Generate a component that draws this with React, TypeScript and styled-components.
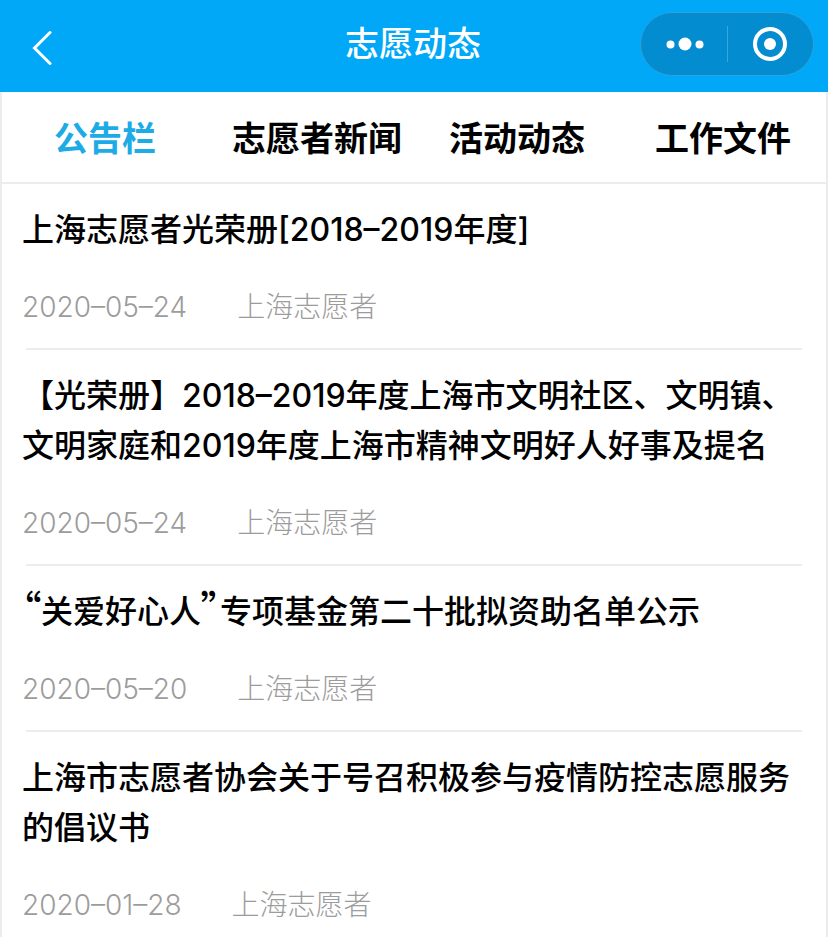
import React, { Fragment, useState } from "react";
import styled, { createGlobalStyle } from "styled-components";

const GlobalStyle = createGlobalStyle`
  *, *::before, *::after { box-sizing: border-box; }
  body {
    margin: 0;
    background: #ffffff;
    color: #000000;
    font-family: Inter, "Noto Sans CJK SC", sans-serif;
  }
  button { font: inherit; border: 0; background: none; padding: 0; cursor: pointer; }
`;

const Header = styled.header`
  display: grid;
  grid-template-columns: 1fr auto 1fr;
  align-items: center;
  height: 92px;
  padding: 0 14px 4px 12px;
  background: #02a8f8;
  color: #ffffff;
`;

const Title = styled.h1`
  margin: 0;
  font-size: 34px;
  line-height: 48px;
  font-weight: 500;
`;

const BackButton = styled.button`
  display: flex;
  justify-self: start;
  && { padding: 16px 16px 8px; }
`;

const Capsule = styled.div`
  display: flex;
  align-items: center;
  justify-self: end;
  width: 174px;
  height: 64px;
  border: 1px solid #2ba3dd;
  border-radius: 32px;
  background: #038ccf;
`;

const CapsuleButton = styled.button`
  display: flex;
  flex: 1;
  align-items: center;
  justify-content: center;
`;

const CapsuleDivider = styled.span`
  width: 1px;
  height: 36px;
  background: #3ba6db;
`;

const Page = styled.main`
  border: 0 solid #ececec;
  border-width: 0 2px;
`;

const Tabs = styled.nav`
  display: grid;
  grid-template-columns: repeat(4, minmax(0, 1fr));
  height: 92px;
  border-bottom: 2px solid #ececec;
`;

const Tab = styled.button<{ $active: boolean }>`
  && { padding: 0 24px 2px; }
  font-size: 34px;
  font-weight: 700;
  white-space: nowrap;
  color: ${({ $active }) => ($active ? "#1cabe6" : "#000000")};
`;

const List = styled.ul`
  margin: 0;
  padding: 0 20px;
  list-style: none;
`;

const Item = styled.li`
  padding-top: 21px;

  &::after {
    content: "";
    display: block;
    height: 2px;
    margin: 19px 4px 0;
    background: #ececec;
  }
`;

const ItemTitle = styled.a`
  display: block;
  color: #000000;
  font-size: 32px;
  font-weight: 500;
  line-height: 50px;
  text-decoration: none;
`;

const Quote = styled.span`
  font-family: "Noto Sans CJK SC", sans-serif;
  font-feature-settings: "palt";
  font-size: 38px;
  line-height: 1;
`;

const Meta = styled.div`
  display: flex;
  gap: 50px;
  margin-top: 30px;
  color: #9c9c9c;
  font-size: 28px;
  font-weight: 300;
  line-height: 44px;
`;

const tabs = ["公告栏", "志愿者新闻", "活动动态", "工作文件"];

const notices = [
  { title: "上海志愿者光荣册[2018–2019年度]", date: "2020–05–24" },
  { title: "【光荣册】2018–2019年度上海市文明社区、文明镇、文明家庭和2019年度上海市精神文明好人好事及提名", date: "2020–05–24" },
  { title: "“关爱好心人”专项基金第二十批拟资助名单公示", date: "2020–05–20" },
  { title: "上海市志愿者协会关于号召积极参与疫情防控志愿服务的倡议书", date: "2020–01–28" },
];

const withQuotes = (text: string) =>
  text.split(/([“”])/).map((part, i) =>
    part === "“" || part === "”" ? <Quote key={i}>{part}</Quote> : <Fragment key={i}>{part}</Fragment>
  );

export default function App() {
  const [active, setActive] = useState(0);
  return (
    <>
      <GlobalStyle />
      <Header>
        <BackButton aria-label="返回">
          <svg width="24" height="36" viewBox="0 0 24 36" fill="none" stroke="#fff" strokeWidth="3" strokeLinecap="round">
            <path d="M22 2.5 6.5 18 22 33.5" />
          </svg>
        </BackButton>
        <Title>志愿动态</Title>
        <Capsule>
          <CapsuleButton aria-label="更多">
            <svg width="40" height="16" viewBox="0 0 40 16" fill="#fff">
              <circle cx="6.5" cy="8.5" r="4" />
              <circle cx="21" cy="8" r="6.5" />
              <circle cx="35.5" cy="8.5" r="4" />
            </svg>
          </CapsuleButton>
          <CapsuleDivider />
          <CapsuleButton aria-label="关闭">
            <svg width="36" height="36" viewBox="0 0 36 36" fill="none">
              <circle cx="18" cy="18" r="15" stroke="#fff" strokeWidth="4" />
              <circle cx="18" cy="18" r="6" fill="#fff" />
            </svg>
          </CapsuleButton>
        </Capsule>
      </Header>
      <Page>
        <Tabs>
          {tabs.map((label, i) => (
            <Tab key={label} $active={i === active} aria-pressed={i === active} onClick={() => setActive(i)}>
              {label}
            </Tab>
          ))}
        </Tabs>
        <List>
          {notices.map((n) => (
            <Item key={n.title}>
              <ItemTitle href="#">{withQuotes(n.title)}</ItemTitle>
              <Meta>
                <time>{n.date}</time>
                <span>上海志愿者</span>
              </Meta>
            </Item>
          ))}
        </List>
      </Page>
    </>
  );
}
